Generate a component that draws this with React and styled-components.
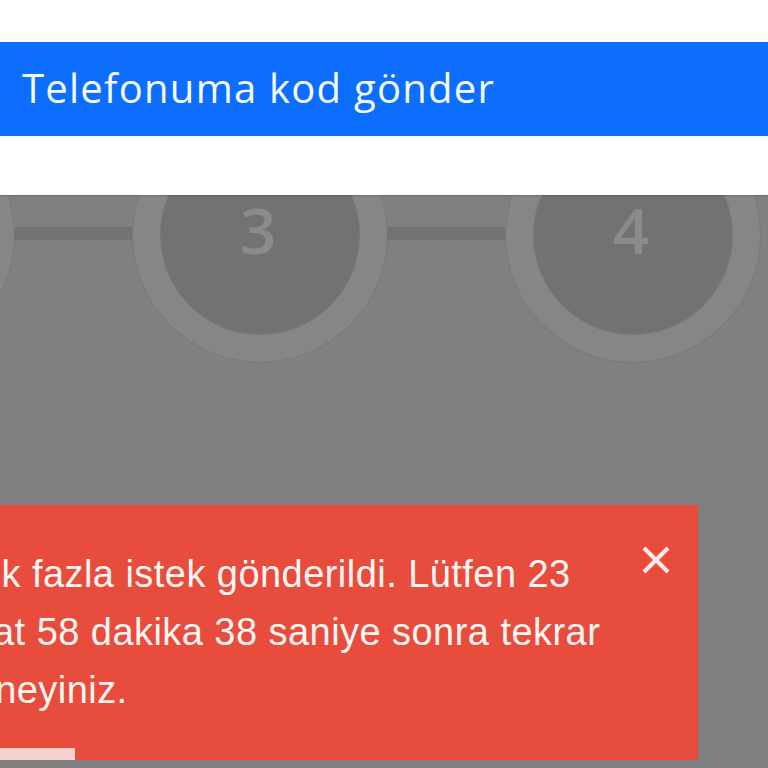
import React from "react";
import styled, { createGlobalStyle } from "styled-components";

const Global = createGlobalStyle`
  html, body { margin: 0; padding: 0; background: #808080; }
  body { overflow: hidden; }
  * { box-sizing: border-box; }
`;

const Page = styled.div`
  position: relative;
  width: 768px;
  height: 768px;
  overflow: hidden;
`;

const Backdrop = styled.div`
  height: 100%;
  background: #808080;
  padding-top: 108px;
  overflow: hidden;
`;

const Stepper = styled.div`
  display: flex;
  align-items: center;
  margin-left: -613px;
`;

const StepCircle = styled.div`
  flex-shrink: 0;
  width: 254px;
  height: 254px;
  border-radius: 50%;
  background: #727272;
  border: 27px solid #868686;
  box-shadow: 0 0 0 1px #797979, inset 0 0 0 1px #7a7a7a;
  display: flex;
  align-items: center;
  justify-content: center;
  font-family: "Open Sans", "Liberation Sans", sans-serif;
  font-weight: 600;
  font-size: 64px;
  line-height: 1;
  color: #8b8b8b;
  padding-bottom: 10px;
  padding-right: 4px;
`;

const Connector = styled.div`
  flex-shrink: 0;
  width: 119px;
  height: 13px;
  margin-top: -4px;
  background: #737373;
`;

const Modal = styled.div`
  position: absolute;
  top: 0;
  left: 0;
  right: 0;
  height: 195px;
  background: #ffffff;
  padding-top: 42px;
  box-shadow: 0 1px 1px rgba(0, 0, 0, 0.15);
`;

const SendButton = styled.button`
  display: flex;
  align-items: center;
  justify-content: flex-start;
  width: 100%;
  height: 94px;
  margin: 0;
  padding: 0 0 4px 22px;
  border: none;
  background: #0d6efd;
  color: #f4faff;
  font-family: "Open Sans", "Liberation Sans", sans-serif;
  font-weight: 500;
  font-size: 40px;
  letter-spacing: 1.25px;
  cursor: pointer;
`;

const Toast = styled.div`
  position: absolute;
  left: -72px;
  top: 505px;
  width: 770px;
  height: 255px;
  background: #e74c3c;
  padding: 40px 70px 0 24px;
  color: #ffffff;
`;

const Message = styled.div`
  font-family: "Liberation Sans", Arial, sans-serif;
  font-size: 38px;
  line-height: 58px;
  letter-spacing: 0.45px;
  color: #fff6f4;
`;

const CloseButton = styled.button`
  position: absolute;
  top: 41px;
  right: 27px;
  width: 30px;
  height: 28px;
  padding: 0;
  border: none;
  background: transparent;
  cursor: pointer;
  display: flex;
  align-items: center;
  justify-content: center;
`;

const Progress = styled.div`
  position: absolute;
  left: 0;
  bottom: 0;
  height: 12px;
  width: ${(p) => p.$width}px;
  background: #f7d2ce;
`;

export default function App() {
  const steps = [1, 2, 3, 4];
  return (
    <>
      <Global />
      <Page>
        <Backdrop>
          <Stepper>
            {steps.map((n, i) => (
              <React.Fragment key={n}>
                {i > 0 && <Connector />}
                <StepCircle>{n}</StepCircle>
              </React.Fragment>
            ))}
          </Stepper>
        </Backdrop>
        <Modal>
          <SendButton>Telefonuma kod gönder</SendButton>
        </Modal>
        <Toast role="alert">
          <Message>
            Çok fazla istek gönderildi. Lütfen 23 saat 58 dakika 38 saniye sonra tekrar deneyiniz.
          </Message>
          <CloseButton aria-label="close">
            <svg width="30" height="28" viewBox="0 0 30 28">
              <path d="M3 2 L27 26 M27 2 L3 26" stroke="#fde9e6" strokeWidth="4.2" strokeLinecap="butt" fill="none" />
            </svg>
          </CloseButton>
          <Progress $width={147} />
        </Toast>
      </Page>
    </>
  );
}
